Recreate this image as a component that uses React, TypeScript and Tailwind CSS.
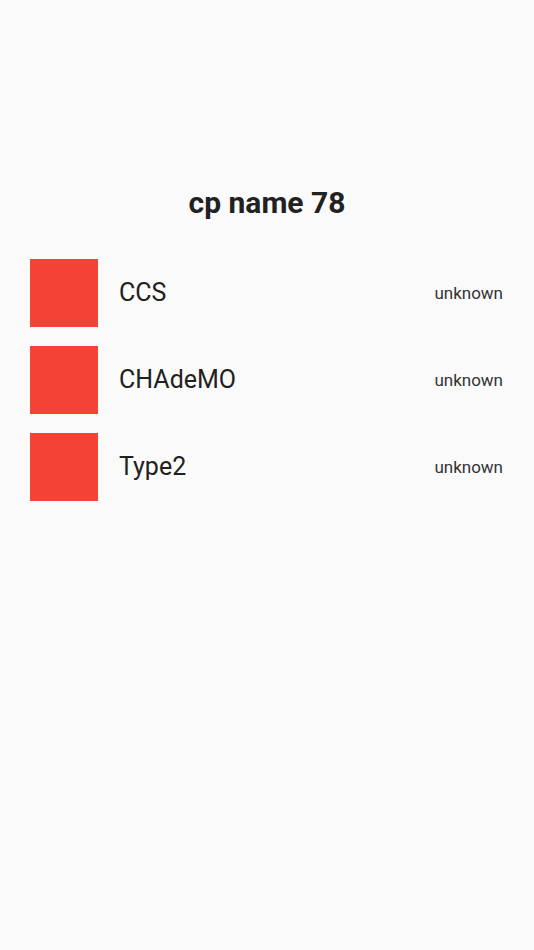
import React from "react";

const items = ["CCS", "CHAdeMO", "Type2"];

export default function App() {
  return (
    <div className="min-h-[950px] w-full bg-[#fafafa] font-['Roboto',sans-serif] text-[#212121]">
      <div className="pt-[185px] flex justify-center">
        <h1 className="text-[30px] leading-[36px] font-bold">cp name 78</h1>
      </div>
      <div className="mt-[38px] flex flex-col gap-[19px] pl-[30px] pr-[31px]">
        {items.map((name) => (
          <div key={name} className="flex items-center h-[68px]">
            <div className="w-[68px] h-[68px] bg-[#f44336] shrink-0" />
            <div className="ml-[21px] flex-1 text-[25px] leading-[30px]">{name}</div>
            <div className="text-[17px] leading-[22px] text-[#333333]">unknown</div>
          </div>
        ))}
      </div>
    </div>
  );
}
